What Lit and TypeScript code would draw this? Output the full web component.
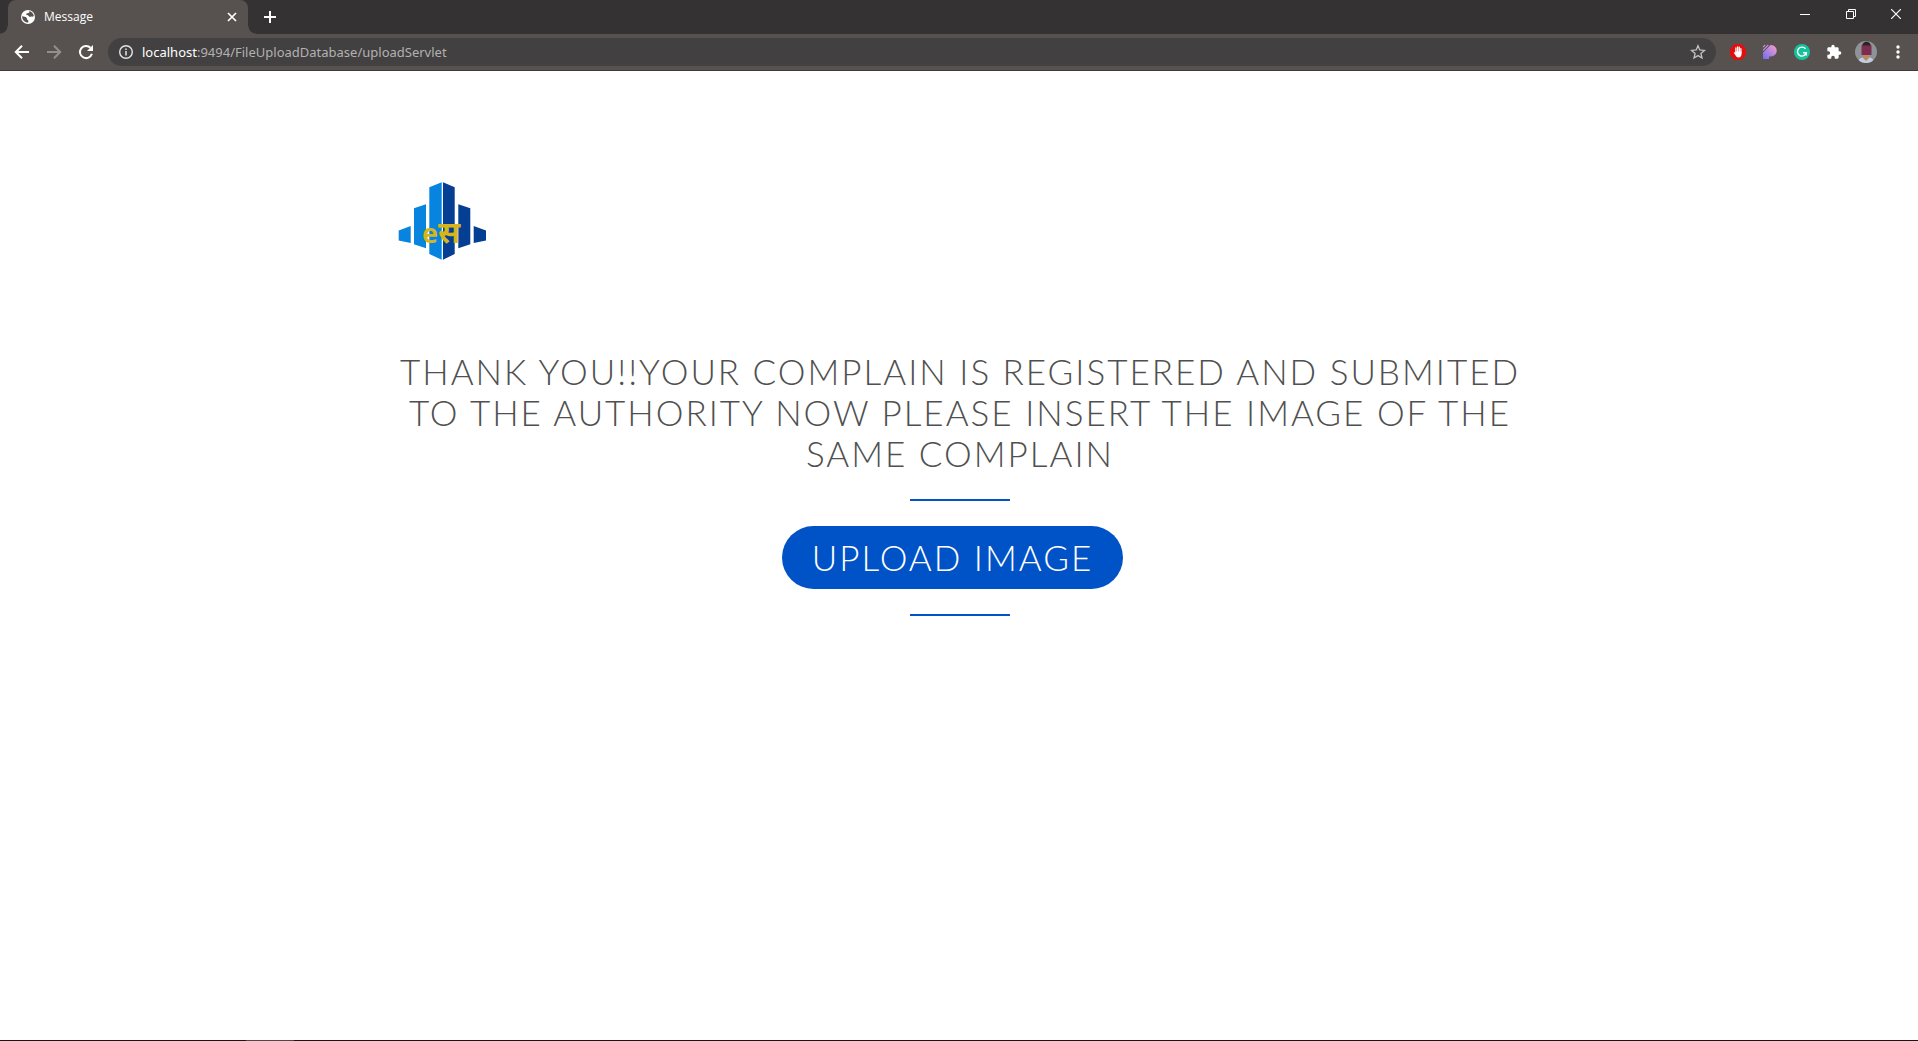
import { LitElement, html, css } from "lit";
import { customElement } from "lit/decorators.js";

@customElement("browser-tabs")
class BrowserTabs extends LitElement {
  static styles = css`
    :host { display: block; }
    .strip { display: flex; height: 34px; background: #353233; padding-left: 8px; }
    .tab { position: relative; display: flex; align-items: center; width: 240px; box-sizing: border-box; padding: 0 8px 0 12px; background: #575250; border-radius: 8px 8px 0 0; color: #fff; font: 12px/16px "Open Sans", sans-serif; }
    .tab::before, .tab::after { content: ""; position: absolute; bottom: 0; width: 8px; height: 8px; }
    .tab::before { right: 100%; background: radial-gradient(circle at 0 0, transparent 7px, #575250 8px); }
    .tab::after { left: 100%; background: radial-gradient(circle at 100% 0, transparent 7px, #575250 8px); }
    .title { flex: 1; margin-left: 8px; }
    button { display: grid; place-items: center; border: 0; padding: 0; background: none; color: #fff; }
    .close { width: 16px; height: 16px; }
    .add { width: 28px; margin-left: 8px; }
    .window { display: flex; margin-left: auto; }
    .window button { width: 46px; height: 28px; }
    .window .quit { width: 44px; }
    svg { display: block; }
  `;
  render() {
    return html`<div class="strip">
      <div class="tab">
        <svg width="16" height="16" viewBox="0 0 16 16"><circle cx="8" cy="8" r="7" fill="#fff"/><path d="M2 7.200c2 .2 3.600.5 4.500 1.500.9 1 .2 1.900 1.300 2.400.9.5.7 1.500.3 2.400-3.300.1-5.900-2.400-6.100-6.300zM7.200 4.300c1-.2 1.800-.1 2.100-.8L9.300 2c2.300.6 4 2.400 4.500 4.800-.6 1.500-1.600.5-2.800.9-1 .3-1.900.1-2.300-.8-.4-.9-1.700-.3-2.300-1.200-.3-.6.1-1.200.8-1.400z" fill="#575250"/></svg>
        <span class="title">Message</span>
        <button class="close" aria-label="Close tab"><svg width="10" height="10" viewBox="0 0 10 10"><path d="M1 1l8 8M9 1L1 9" stroke="#fff" stroke-width="1.700"/></svg></button>
      </div>
      <button class="add" aria-label="New tab"><svg width="12" height="12" viewBox="0 0 12 12"><path d="M6 0v12M0 6h12" stroke="#fff" stroke-width="2"/></svg></button>
      <div class="window">
        <button aria-label="Minimize"><svg width="10" height="10" viewBox="0 0 10 10"><path d="M0 5.500h10" stroke="#fff"/></svg></button>
        <button aria-label="Restore"><svg width="10" height="10" viewBox="0 0 10 10"><path d="M.5 2.500h7v7h-7zM2.500 2.500v-2h7v7h-2" fill="none" stroke="#fff"/></svg></button>
        <button class="quit" aria-label="Close"><svg width="10" height="10" viewBox="0 0 10 10"><path d="M0 0l10 10M10 0L0 10" stroke="#fff" stroke-width="1.200"/></svg></button>
      </div>
    </div>`;
  }
}

@customElement("browser-toolbar")
class BrowserToolbar extends LitElement {
  static styles = css`
    :host { display: block; }
    .bar { display: flex; align-items: center; height: 36px; background: #575250; border-bottom: 1px solid #403a3b; padding: 0 10px 0 8px; }
    button { display: grid; place-items: center; border: 0; padding: 0; background: none; width: 28px; height: 28px; }
    .nav { display: flex; gap: 4px; margin-right: 8px; }
    .address { flex: 1; display: flex; align-items: center; height: 28px; border-radius: 14px; background: #424040; padding: 0 4px; }
    .url { flex: 1; margin-left: 2px; font: 13px/18px "Noto Sans", sans-serif; color: #b3b1b1; }
    .host { color: #fff; }
    .tools { display: flex; gap: 4px; margin-left: 8px; }
    .menu { width: 20px; margin-left: 8px; }
    svg { display: block; }
  `;
  render() {
    return html`<div class="bar">
      <div class="nav">
        <button aria-label="Back"><svg width="16" height="16" viewBox="0 0 16 16"><path d="M15 8H2.500M8 1.800L1.800 8 8 14.200" fill="none" stroke="#fff" stroke-width="2"/></svg></button>
        <button aria-label="Forward"><svg width="16" height="16" viewBox="0 0 16 16"><path d="M1 8h12.500M8 1.800L14.200 8 8 14.200" fill="none" stroke="#92908f" stroke-width="2"/></svg></button>
        <button aria-label="Reload"><svg width="16" height="16" viewBox="0 0 16 16"><path d="M13.900 9.800A6.100 6.100 0 1 1 12.500 3.800" fill="none" stroke="#fff" stroke-width="2"/><path d="M15 1v6H9z" fill="#fff"/></svg></button>
      </div>
      <div class="address">
        <button aria-label="Site information"><svg width="16" height="16" viewBox="0 0 16 16"><circle cx="8" cy="8" r="6.300" fill="none" stroke="#e6e5e5" stroke-width="1.400"/><path d="M8 7v4.500M8 4.500v1.500" stroke="#e6e5e5" stroke-width="1.500"/></svg></button>
        <span class="url"><span class="host">localhost</span>:9494/FileUploadDatabase/uploadServlet</span>
        <button aria-label="Bookmark"><svg width="16" height="16" viewBox="0 0 16 16"><path d="M8 1.700l1.800 4.300 4.700.4-3.600 3.100 1.100 4.500L8 11.600 4 14l1.100-4.500-3.600-3.100 4.700-.4z" fill="none" stroke="#c4c3c3" stroke-width="1.300"/></svg></button>
      </div>
      <div class="tools">
        <button aria-label="Ad blocker"><svg width="16" height="16" viewBox="0 0 16 16"><path d="M4.700 0h6.600L16 4.700v6.600L11.300 16H4.700L0 11.300V4.700z" fill="#e01010"/><path d="M5.900 8.500V4M7.600 8V3M9.300 8V3.200M10.900 9V4.700" stroke="#fff" stroke-width="1.300" stroke-linecap="round"/><path d="M5.300 7.500h6.200v2.500c0 2-1 3.500-2.800 3.500-1.700 0-2.400-.8-3.100-2L3.800 8.700c.3-.8 1-.5 1.500.2z" fill="#fff"/></svg></button>
        <button aria-label="Page tools"><svg width="16" height="16" viewBox="0 0 16 16"><defs><linearGradient id="g" x1="0" y1="1" x2="1" y2="0"><stop offset="0" stop-color="#6b6cf5"/><stop offset="1" stop-color="#ff9fc8"/></linearGradient></defs><path d="M1 8.500L8.500 1H9a5.500 5.500 0 0 1 0 11.500H7V15H1z" fill="url(#g)"/><path d="M1 3.200L3.200 1M1 6.300L6.300 1" stroke="#c88de0" stroke-width="1.100"/></svg></button>
        <button aria-label="Writing assistant"><svg width="16" height="16" viewBox="0 0 16 16"><circle cx="8" cy="8" r="8" fill="#15c39a"/><path d="M11.500 4.800A4.500 4.500 0 1 0 12.300 8.800H9M12.300 8.800v2.700" fill="none" stroke="#fff" stroke-width="1.400"/></svg></button>
        <button aria-label="Extensions"><svg width="16" height="16" viewBox="0 0 24 24"><path d="M20.500 11H19V7c0-1.100-.9-2-2-2h-4V3.500a2.500 2.500 0 0 0-5 0V5H4c-1.100 0-2 .9-2 2v3.800h1.500a2.700 2.700 0 0 1 0 5.400H2V20c0 1.100.9 2 2 2h3.800v-1.500a2.700 2.700 0 0 1 5.400 0V22H17c1.100 0 2-.9 2-2v-4h1.500a2.500 2.500 0 0 0 0-5z" fill="#fff"/></svg></button>
        <button aria-label="Profile"><svg width="22" height="22" viewBox="0 0 22 22"><defs><clipPath id="c"><circle cx="11" cy="11" r="11"/></clipPath></defs><g clip-path="url(#c)"><path d="M0 0h22v22H0z" fill="#8f9296"/><path d="M3 22c0-4 3-6 8-6s8 2 8 6z" fill="#c3cde2"/><path d="M8 13h6v4l-3 3-3-3z" fill="#b98a5c"/><path d="M7 6c0-7 9-7 9 0v1H7z" fill="#2c2422"/><path d="M6.500 4.500h10v9.500h-10z" fill="#7d2d50"/></g></svg></button>
      </div>
      <button class="menu" aria-label="Menu"><svg width="4" height="14" viewBox="0 0 4 14"><g fill="#fff"><circle cx="2" cy="2" r="1.700"/><circle cx="2" cy="7" r="1.700"/><circle cx="2" cy="12" r="1.700"/></g></svg></button>
    </div>`;
  }
}

@customElement("app-root")
class AppRoot extends LitElement {
  static styles = css`
    :host { display: flex; flex-direction: column; min-height: 100vh; background: #fff; }
    main { flex: 1; width: 100%; max-width: 1140px; margin: 0 auto; box-sizing: border-box; padding: 104px 0 0 2px; }
    .logo { display: block; width: 106px; height: 96px; }
    h1 { margin: 80px 0 0; text-align: center; text-transform: uppercase; font: 300 35px/41px Lato, sans-serif; letter-spacing: 2px; color: #505050; }
    .actions { display: flex; flex-direction: column; align-items: center; gap: 25px; margin-top: 25px; }
    hr { width: 100px; height: 2px; margin: 0; border: 0; background: #0052cc; }
    .upload { margin-right: 15px; border: 0; border-radius: 32px; padding: 11px 30px; background: #0052c7; color: #fff; font: 300 35px/41px Lato, sans-serif; letter-spacing: 2px; text-transform: uppercase; }
    footer { display: flex; height: 1px; background: #171516; }
    .active { width: 48px; margin-left: 246px; background: #4a4849; }
  `;
  render() {
    return html`
      <browser-tabs></browser-tabs>
      <browser-toolbar></browser-toolbar>
      <main>
        <svg class="logo" viewBox="0 0 106 96" role="img" aria-label="Logo">
          <path fill="#0784df" d="M7.700 55.500l12-4.500v17l-12-2.500zM23 33.300l12-4v44l-12-4zM38.300 12.300l12.400-5v77.400L38.300 79z"/>
          <path fill="#043f94" d="M52 7.300l11.700 5V79L52 84.700zM67.300 29.300l12 4v36l-12 4zM82.700 51l12.300 4.500v10L82.700 68z"/>
          <text x="31" y="68" font-family="Open Sans, sans-serif" font-size="27" font-weight="700" fill="#d7b51c">e</text>
          <text x="47" y="68" font-family="Noto Sans Devanagari, Noto Sans, sans-serif" font-size="30" font-weight="700" fill="#d7b51c">स</text>
        </svg>
        <h1>Thank you!!Your complain is registered and submited to the authority now please insert the image of the same complain</h1>
        <div class="actions"><hr><button class="upload">Upload image</button><hr></div>
      </main>
      <footer><div class="active"></div></footer>
    `;
  }
}
